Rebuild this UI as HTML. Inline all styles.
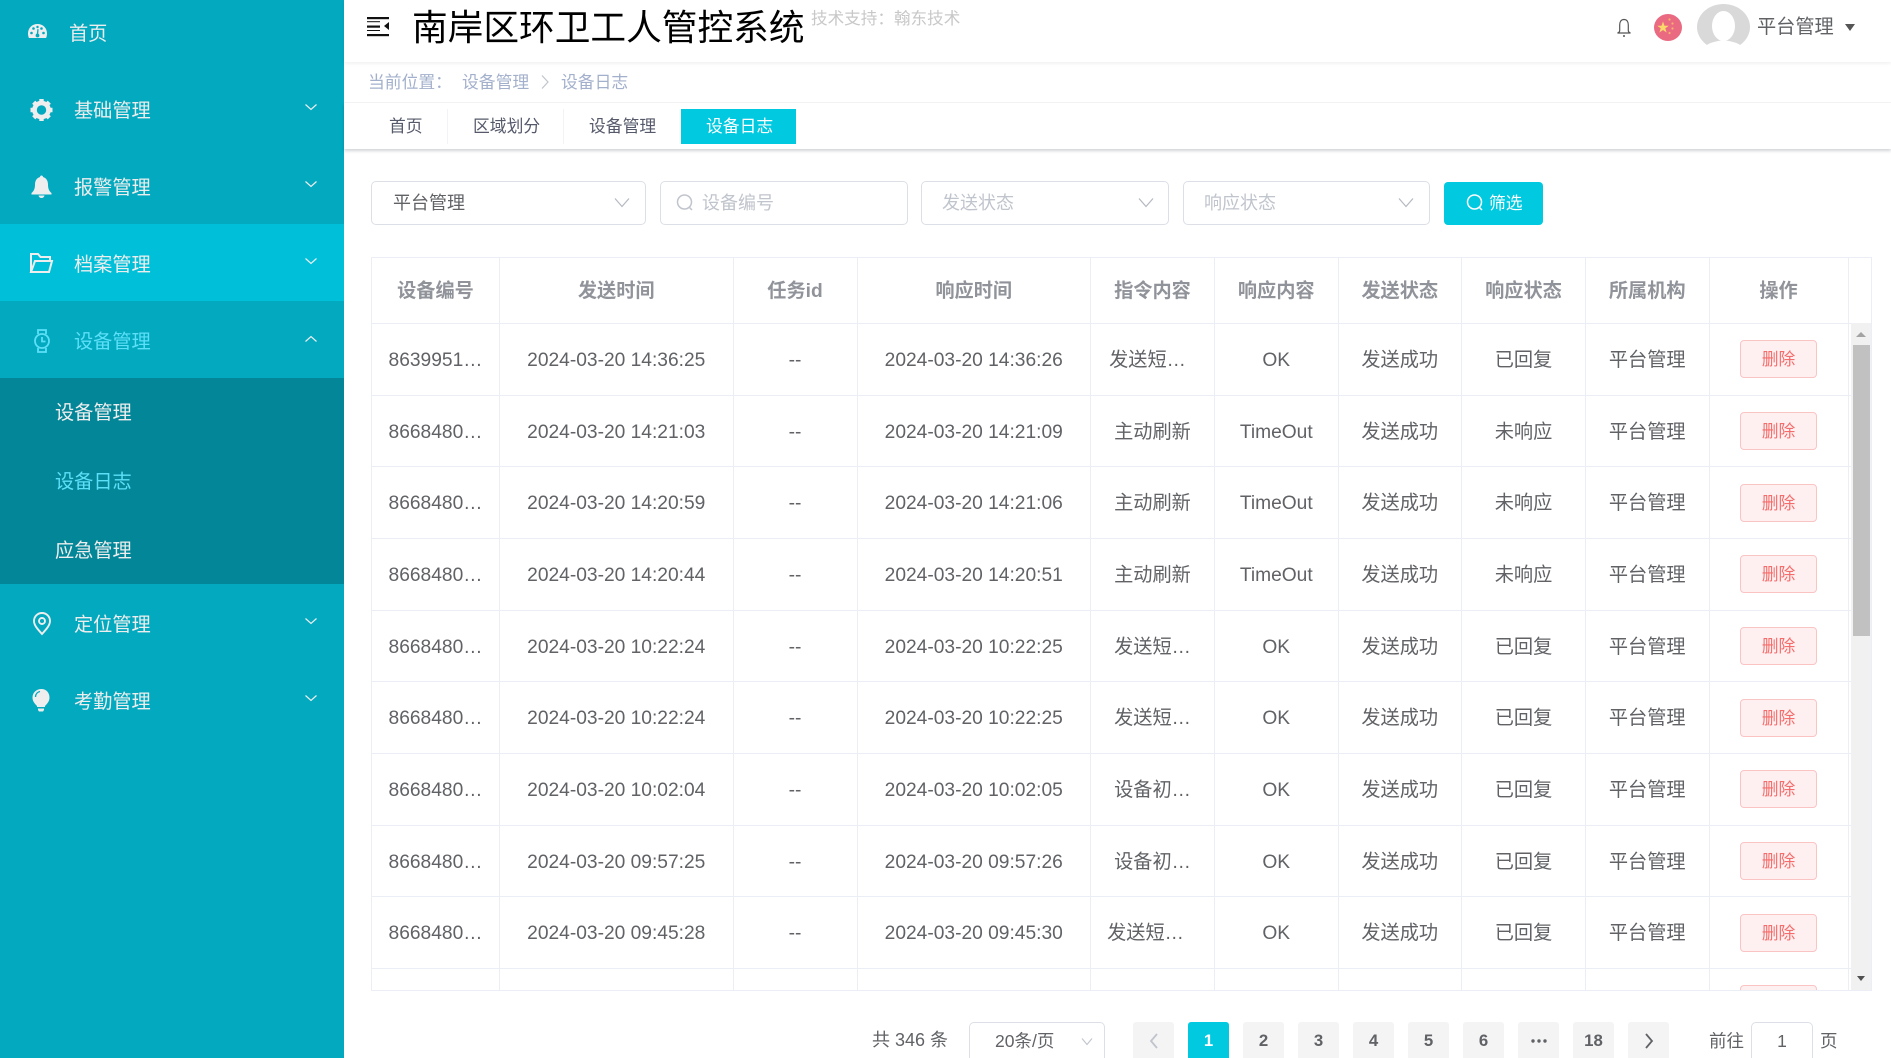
<!DOCTYPE html>
<html lang="zh-CN"><head><meta charset="utf-8"><title>南岸区环卫工人管控系统</title>
<style>
*{box-sizing:border-box}
html,body{margin:0;padding:0;width:1891px;height:1058px;overflow:hidden;background:#fff;font-family:"Liberation Sans","Noto Sans CJK SC",sans-serif;color:#606266}
#root{position:relative;width:1891px;height:1058px;overflow:hidden}
.a{position:absolute}
.t{position:absolute;white-space:nowrap}
#side{left:0;top:0;width:344px;height:1058px;background:#03a9bf;color:#eee}
#side .t{font-size:19.2px;line-height:30px}
.ch{position:absolute;left:304px;width:14px;height:8px}
.box{position:absolute;top:181px;height:44px;border:1px solid #dcdfe6;border-radius:5px;background:#fff}
.row{display:flex;height:71.67px;border-bottom:1px solid #ebeef5}
.c{height:100%;border-right:1px solid #ebeef5;text-align:center;font-size:19.2px;line-height:73.6px;white-space:nowrap;position:relative;flex:none}
.w1{width:128px}.w2{width:233.5px}.w3{width:124px}.w4{width:233.5px}.w5{width:124px}.w6{width:123.5px}.w7{width:123.5px}.w8{width:124px}.w9{width:123.5px}.w10{width:139px}
.hd .c{font-weight:bold;color:#909399;line-height:67px}
.del{display:block;width:77px;height:38px;margin:16.3px auto 0;border:1px solid #fbc4c4;background:#fef0f0;color:#f56c6c;font-size:16.8px;line-height:37px;border-radius:4px}
.p{position:absolute;top:1022px;width:41px;height:41px;background:#f4f4f5;border-radius:3px;text-align:center;font-weight:bold;font-size:16.8px;line-height:38px;color:#606266}
</style></head><body><div id="root">

<div id="side" class="a">
<div class="a" style="left:0;top:224px;width:344px;height:77px;background:#00c0d9"></div>
<div class="a" style="left:0;top:378px;width:344px;height:206px;background:#038698"></div>

<svg class="a" style="left:27px;top:22px" width="21" height="19" viewBox="0 0 21 19"><path fill="#eee" d="M10.5 2C5 2 1 6 1 11.5c0 1.6.3 3 .9 4.500h17.200c.6-1.500.9-2.900.9-4.500C20 6 16 2 10.500 2z"/><g fill="#03a9bf"><circle cx="4.500" cy="11" r="1.300"/><circle cx="6.500" cy="6.500" r="1.300"/><circle cx="16.500" cy="11" r="1.300"/><circle cx="14.500" cy="6.500" r="1.300"/><circle cx="10.500" cy="5" r="1.200"/><circle cx="10.500" cy="13.500" r="1.900"/><path d="M9.600 13l.8-6 1.200.2-.5 6z"/></g></svg>
<div class="t" style="left:69px;top:20px">首页</div>

<svg class="a" style="left:29px;top:98px" width="25" height="24" viewBox="0 0 25 24"><circle cx="12.500" cy="12" r="7" fill="none" stroke="#eee" stroke-width="4.600"/><g stroke="#eee" stroke-width="4.400"><path d="M12.500 1v4M12.500 19v4M1.500 12h4M19.500 12h4M4.700 4.200l2.800 2.800M17.500 17l2.800 2.800M20.300 4.200L17.500 7M7.500 17l-2.800 2.800"/></g></svg>
<div class="t" style="left:74px;top:97px">基础管理</div>
<svg class="ch" style="top:103px" viewBox="0 0 14 8"><path d="M1.500 1.500L7 6.500l5.500-5" fill="none" stroke="#eee" stroke-width="1.200"/></svg>

<svg class="a" style="left:30px;top:174px" width="23" height="25" viewBox="0 0 23 25"><path fill="#eee" d="M11.500 1.500c-1 0-1.500.7-1.500 1.500C6.500 4 5 7 5 10.500c0 4-1 6.500-3.500 8.500v1.500h20V19C19 17 18 14.500 18 10.500 18 7 16.500 4 13 3c0-.8-.5-1.500-1.500-1.500z"/><path fill="#eee" d="M8.500 21.500h6c-.3 1.500-1.500 2.500-3 2.500s-2.700-1-3-2.500z"/></svg>
<div class="t" style="left:74px;top:174px">报警管理</div>
<svg class="ch" style="top:180px" viewBox="0 0 14 8"><path d="M1.500 1.500L7 6.500l5.500-5" fill="none" stroke="#eee" stroke-width="1.200"/></svg>

<svg class="a" style="left:29px;top:252px" width="25" height="22" viewBox="0 0 25 22"><path fill="none" stroke="#eee" stroke-width="2" d="M2 20V2h7l2.500 3H21v4M2 20h18l3-11H6L2 20z"/></svg>
<div class="t" style="left:74px;top:251px">档案管理</div>
<svg class="ch" style="top:257px" viewBox="0 0 14 8"><path d="M1.500 1.500L7 6.500l5.500-5" fill="none" stroke="#eee" stroke-width="1.200"/></svg>

<svg class="a" style="left:32px;top:328px" width="20" height="26" viewBox="0 0 20 26"><g fill="none" stroke="#5ce0f8" stroke-width="1.800"><circle cx="10" cy="13" r="7"/><path d="M6 6V2h8v4M6 20v4h8v-4M10 9v4.500h3.500"/></g></svg>
<div class="t" style="left:74px;top:328px;color:#5ce0f8">设备管理</div>
<svg class="ch" style="top:335px" viewBox="0 0 14 8"><path d="M1.500 6.500L7 1.500l5.500 5" fill="none" stroke="#eee" stroke-width="1.200"/></svg>

<div class="t" style="left:55px;top:399px">设备管理</div>
<div class="t" style="left:55px;top:468px;color:#5ce0f8">设备日志</div>
<div class="t" style="left:55px;top:537px">应急管理</div>

<svg class="a" style="left:32px;top:611px" width="20" height="25" viewBox="0 0 20 25"><path fill="none" stroke="#eee" stroke-width="1.900" d="M10 23C5 17.500 2 14 2 10a8 8 0 0 1 16 0c0 4-3 7.500-8 13z"/><circle cx="10" cy="10" r="3" fill="none" stroke="#eee" stroke-width="1.900"/></svg>
<div class="t" style="left:74px;top:611px">定位管理</div>
<svg class="ch" style="top:617px" viewBox="0 0 14 8"><path d="M1.500 1.500L7 6.500l5.500-5" fill="none" stroke="#eee" stroke-width="1.200"/></svg>

<svg class="a" style="left:31px;top:688px" width="20" height="25" viewBox="0 0 20 25"><path fill="#eee" d="M10.500 1C5.500 1 1.500 4.500 1.500 9.500c0 3.500 2 6 4.500 8.500v1h8v-1c2.500-2.500 4.500-5 4.500-8.500C18.500 4.500 15 1 10.500 1z"/><path fill="none" stroke="#03a9bf" stroke-width="1.300" d="M4.500 9c0-3 2-5 4.500-5.500"/><path fill="#eee" d="M7 20.500h6V22l-1 1.500H8L7 22z"/></svg>
<div class="t" style="left:74px;top:688px">考勤管理</div>
<svg class="ch" style="top:694px" viewBox="0 0 14 8"><path d="M1.500 1.500L7 6.500l5.500-5" fill="none" stroke="#eee" stroke-width="1.200"/></svg>
</div>

<div class="a" style="left:344px;top:0;width:1547px;height:62px;background:#fff;box-shadow:0 1px 4px rgba(0,21,41,.08)"></div>
<svg class="a" style="left:367px;top:17px" width="22" height="20" viewBox="0 0 22 20"><g fill="#111"><rect x="0" y="0" width="22" height="2.200"/><rect x="0" y="8.500" width="13" height="2.200"/><rect x="0" y="17" width="22" height="2.200"/><rect x="0" y="4.200" width="13" height="1"/><rect x="0" y="13" width="13" height="1"/><path d="M22 5v8l-5-4z"/></g></svg>
<div class="t" style="left:412px;top:5px;font-size:35.700px;line-height:46px;color:#000">南岸区环卫工人管控系统</div>
<div class="t" style="left:811px;top:7px;font-size:16.600px;line-height:24px;color:#c8c8c8">技术支持&#xFF1A;翰东技术</div>

<svg class="a" style="left:1615px;top:18px" width="18" height="20" viewBox="0 0 18 20"><path fill="none" stroke="#555" stroke-width="1.200" d="M9 1.500c-3 0-4.300 2.500-4.300 5.500v5.500c0 1-.7 2-2.200 2.500h13c-1.500-.5-2.200-1.500-2.200-2.500V7c0-3-1.300-5.500-4.300-5.500z"/><circle cx="9" cy="18" r="1" fill="#555"/></svg>
<svg class="a" style="left:1654px;top:14px" width="28" height="27" viewBox="0 0 28 27"><ellipse cx="14" cy="13.500" rx="14" ry="13.500" fill="#ea6a82"/><path fill="#fbd86a" d="M9 7.500l1.500 4.200h4.300l-3.500 2.600 1.300 4.200L9 16l-3.600 2.500 1.300-4.200-3.500-2.600h4.300z"/><g fill="#f3b36e"><circle cx="15.500" cy="5.500" r="1.100"/><circle cx="18.500" cy="9.500" r="1.100"/><circle cx="18.500" cy="14.500" r="1.100"/><circle cx="15.500" cy="19" r="1.100"/></g></svg>
<svg class="a" style="left:1697px;top:4px" width="53" height="48" viewBox="0 0 53 48"><ellipse cx="26.500" cy="23" rx="26.500" ry="23" fill="#d9d9d9"/><ellipse cx="26.500" cy="22" rx="11.500" ry="15" fill="#fff"/><path fill="#fff" d="M4 48c3-6 8-9 13-10 6-2 13-2 19 0 5 1 10 4 13 10z"/></svg>
<div class="t" style="left:1757px;top:13px;font-size:19.200px;line-height:30px;color:#606266">平台管理</div>
<div class="a" style="left:1845px;top:24px;width:0;height:0;border-left:5.500px solid transparent;border-right:5.500px solid transparent;border-top:7px solid #555"></div>

<div class="t" style="left:368px;top:71px;font-size:16.800px;line-height:24px;color:#a3b0cc">当前位置&#xFF1A;</div>
<div class="t" style="left:462px;top:71px;font-size:16.800px;line-height:24px;color:#a3b0cc">设备管理</div>
<svg class="a" style="left:540px;top:74px" width="10" height="16" viewBox="0 0 10 16"><path d="M2 1.500L8 8l-6 6.500" fill="none" stroke="#c0c4cc" stroke-width="1.200"/></svg>
<div class="t" style="left:561px;top:71px;font-size:16.800px;line-height:24px;color:#a3b0cc">设备日志</div>
<div class="a" style="left:344px;top:102px;width:1547px;height:1px;background:#f3f4f6"></div>

<div class="a" style="left:344px;top:103px;width:1547px;height:46px;background:#fff;box-shadow:0 2px 3px rgba(0,21,41,.18)"></div>
<div class="a" style="left:447px;top:109px;width:1px;height:35px;background:#f2f3f5"></div>
<div class="a" style="left:563px;top:109px;width:1px;height:35px;background:#f2f3f5"></div>
<div class="t" style="left:389px;top:115px;font-size:16.800px;line-height:24px;color:#55596a">首页</div>
<div class="t" style="left:473px;top:115px;font-size:16.800px;line-height:24px;color:#55596a">区域划分</div>
<div class="t" style="left:589px;top:115px;font-size:16.800px;line-height:24px;color:#55596a">设备管理</div>
<div class="a" style="left:681px;top:109px;width:115px;height:35px;background:#00c9e0"></div>
<div class="t" style="left:706px;top:115px;font-size:16.800px;line-height:24px;color:#fff">设备日志</div>

<div class="box" style="left:371px;width:275px"></div>
<div class="t" style="left:393px;top:190px;font-size:18px;line-height:27px;color:#606266">平台管理</div>
<svg class="a" style="left:614px;top:197px" width="16" height="11" viewBox="0 0 16 11"><path d="M1 1.500l7 8 7-8" fill="none" stroke="#b4b8c0" stroke-width="1.200"/></svg>
<div class="box" style="left:660px;width:248px"></div>
<svg class="a" style="left:676px;top:193px" width="18" height="19" viewBox="0 0 18 19"><circle cx="8.500" cy="9" r="7" fill="none" stroke="#c0c4cc" stroke-width="1.500"/><path d="M13 14l3 3" stroke="#c0c4cc" stroke-width="1.500"/></svg>
<div class="t" style="left:702px;top:190px;font-size:18px;line-height:27px;color:#c0c4cc">设备编号</div>
<div class="box" style="left:921px;width:248px"></div>
<div class="t" style="left:942px;top:190px;font-size:18px;line-height:27px;color:#c0c4cc">发送状态</div>
<svg class="a" style="left:1138px;top:197px" width="16" height="11" viewBox="0 0 16 11"><path d="M1 1.500l7 8 7-8" fill="none" stroke="#b4b8c0" stroke-width="1.200"/></svg>
<div class="box" style="left:1183px;width:247px"></div>
<div class="t" style="left:1204px;top:190px;font-size:18px;line-height:27px;color:#c0c4cc">响应状态</div>
<svg class="a" style="left:1398px;top:197px" width="16" height="11" viewBox="0 0 16 11"><path d="M1 1.500l7 8 7-8" fill="none" stroke="#b4b8c0" stroke-width="1.200"/></svg>
<div class="a" style="left:1444px;top:182px;width:99px;height:43px;background:#00c9e0;border-radius:4px"></div>
<svg class="a" style="left:1466px;top:193px" width="18" height="19" viewBox="0 0 18 19"><circle cx="8.500" cy="9" r="7" fill="none" stroke="#fff" stroke-width="1.500"/><path d="M13 14l3 3" stroke="#fff" stroke-width="1.500"/></svg>
<div class="t" style="left:1489px;top:192px;font-size:16.800px;line-height:24px;color:#fff">筛选</div>

<div class="a" style="left:371px;top:257px;width:1501px;height:734px;border:1px solid #ebeef5;overflow:hidden">
<div class="row hd" style="height:66px;width:1499px"><div class="c w1">设备编号</div><div class="c w2">发送时间</div><div class="c w3">任务id</div><div class="c w4">响应时间</div><div class="c w5">指令内容</div><div class="c w6">响应内容</div><div class="c w7">发送状态</div><div class="c w8">响应状态</div><div class="c w9">所属机构</div><div class="c w10">操作</div></div>

<div class="row"><div class="c w1">8639951…</div><div class="c w2">2024-03-20 14:36:25</div><div class="c w3">--</div><div class="c w4">2024-03-20 14:36:26</div><div class="c w5"><span style="position:relative;left:-5px">发送短…</span></div><div class="c w6">OK</div><div class="c w7">发送成功</div><div class="c w8">已回复</div><div class="c w9">平台管理</div><div class="c w10"><span class="del">删除</span></div></div>
<div class="row"><div class="c w1">8668480…</div><div class="c w2">2024-03-20 14:21:03</div><div class="c w3">--</div><div class="c w4">2024-03-20 14:21:09</div><div class="c w5">主动刷新</div><div class="c w6">TimeOut</div><div class="c w7">发送成功</div><div class="c w8">未响应</div><div class="c w9">平台管理</div><div class="c w10"><span class="del">删除</span></div></div>
<div class="row"><div class="c w1">8668480…</div><div class="c w2">2024-03-20 14:20:59</div><div class="c w3">--</div><div class="c w4">2024-03-20 14:21:06</div><div class="c w5">主动刷新</div><div class="c w6">TimeOut</div><div class="c w7">发送成功</div><div class="c w8">未响应</div><div class="c w9">平台管理</div><div class="c w10"><span class="del">删除</span></div></div>
<div class="row"><div class="c w1">8668480…</div><div class="c w2">2024-03-20 14:20:44</div><div class="c w3">--</div><div class="c w4">2024-03-20 14:20:51</div><div class="c w5">主动刷新</div><div class="c w6">TimeOut</div><div class="c w7">发送成功</div><div class="c w8">未响应</div><div class="c w9">平台管理</div><div class="c w10"><span class="del">删除</span></div></div>
<div class="row"><div class="c w1">8668480…</div><div class="c w2">2024-03-20 10:22:24</div><div class="c w3">--</div><div class="c w4">2024-03-20 10:22:25</div><div class="c w5">发送短…</div><div class="c w6">OK</div><div class="c w7">发送成功</div><div class="c w8">已回复</div><div class="c w9">平台管理</div><div class="c w10"><span class="del">删除</span></div></div>
<div class="row"><div class="c w1">8668480…</div><div class="c w2">2024-03-20 10:22:24</div><div class="c w3">--</div><div class="c w4">2024-03-20 10:22:25</div><div class="c w5">发送短…</div><div class="c w6">OK</div><div class="c w7">发送成功</div><div class="c w8">已回复</div><div class="c w9">平台管理</div><div class="c w10"><span class="del">删除</span></div></div>
<div class="row"><div class="c w1">8668480…</div><div class="c w2">2024-03-20 10:02:04</div><div class="c w3">--</div><div class="c w4">2024-03-20 10:02:05</div><div class="c w5">设备初…</div><div class="c w6">OK</div><div class="c w7">发送成功</div><div class="c w8">已回复</div><div class="c w9">平台管理</div><div class="c w10"><span class="del">删除</span></div></div>
<div class="row"><div class="c w1">8668480…</div><div class="c w2">2024-03-20 09:57:25</div><div class="c w3">--</div><div class="c w4">2024-03-20 09:57:26</div><div class="c w5">设备初…</div><div class="c w6">OK</div><div class="c w7">发送成功</div><div class="c w8">已回复</div><div class="c w9">平台管理</div><div class="c w10"><span class="del">删除</span></div></div>
<div class="row"><div class="c w1">8668480…</div><div class="c w2">2024-03-20 09:45:28</div><div class="c w3">--</div><div class="c w4">2024-03-20 09:45:30</div><div class="c w5"><span style="position:relative;left:-7px">发送短…</span></div><div class="c w6">OK</div><div class="c w7">发送成功</div><div class="c w8">已回复</div><div class="c w9">平台管理</div><div class="c w10"><span class="del">删除</span></div></div>
<div class="row"><div class="c w1"></div><div class="c w2"></div><div class="c w3"></div><div class="c w4"></div><div class="c w5"></div><div class="c w6"></div><div class="c w7"></div><div class="c w8"></div><div class="c w9"></div><div class="c w10"><span class="del">删除</span></div></div>

<div class="a" style="left:1479px;top:65px;width:20px;height:667px;background:#f1f1f1"></div>
<div class="a" style="left:1481px;top:87px;width:17px;height:291px;background:#c1c1c1"></div>
<div class="a" style="left:1484px;top:74px;width:0;height:0;border-left:5px solid transparent;border-right:5px solid transparent;border-bottom:5px solid #a3a3a3"></div>
<div class="a" style="left:1485px;top:718px;width:0;height:0;border-left:4px solid transparent;border-right:4px solid transparent;border-top:5px solid #505050"></div>
</div>

<div class="t" style="left:872px;top:1026px;font-size:18px;line-height:28px;color:#606266">共 346 条</div>
<div class="a" style="left:969px;top:1022px;width:136px;height:44px;border:1px solid #dcdfe6;border-radius:5px"></div>
<div class="t" style="left:995px;top:1027px;font-size:17.500px;line-height:28px;color:#606266">20条/页</div>
<svg class="a" style="left:1081px;top:1037px" width="12" height="9" viewBox="0 0 12 9"><path d="M1 1.500l5 6 5-6" fill="none" stroke="#c0c4cc" stroke-width="1.100"/></svg>

<div class="p" style="left:1133px"><svg width="10" height="16" viewBox="0 0 10 16" style="margin-top:11px"><path d="M8 1L2 8l6 7" fill="none" stroke="#c0c4cc" stroke-width="1.800"/></svg></div>
<div class="p" style="left:1188px;background:#00c9e0;color:#fff">1</div>
<div class="p" style="left:1243px">2</div>
<div class="p" style="left:1298px">3</div>
<div class="p" style="left:1353px">4</div>
<div class="p" style="left:1408px">5</div>
<div class="p" style="left:1463px">6</div>
<div class="p" style="left:1518px"><svg width="16" height="4" viewBox="0 0 16 4" style="margin-top:17px;display:block;margin-left:12.500px"><g fill="#606266"><circle cx="2" cy="2" r="1.700"/><circle cx="8" cy="2" r="1.700"/><circle cx="14" cy="2" r="1.700"/></g></svg></div>
<div class="p" style="left:1573px">18</div>
<div class="p" style="left:1628px"><svg width="10" height="16" viewBox="0 0 10 16" style="margin-top:11px"><path d="M2 1l6 7-6 7" fill="none" stroke="#606266" stroke-width="1.800"/></svg></div>
<div class="t" style="left:1709px;top:1027px;font-size:17.500px;line-height:28px;color:#606266">前往</div>
<div class="a" style="left:1751px;top:1022px;width:62px;height:44px;border:1px solid #dcdfe6;border-radius:5px;text-align:center;font-size:17.500px;line-height:36px;color:#606266">1</div>
<div class="t" style="left:1820px;top:1027px;font-size:17.500px;line-height:28px;color:#606266">页</div>
</div></body></html>
